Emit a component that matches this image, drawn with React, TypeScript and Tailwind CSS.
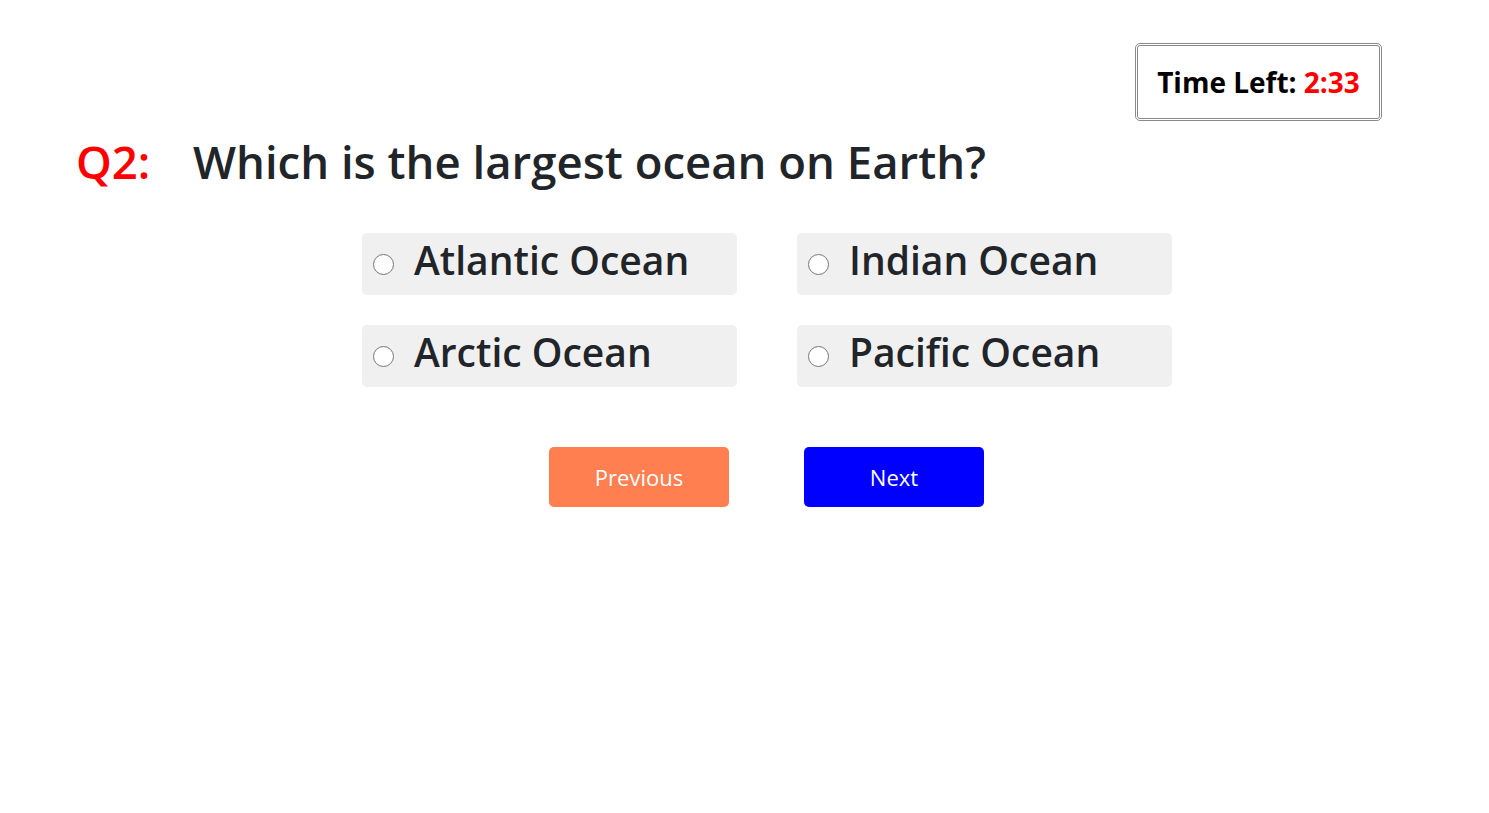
import { useState } from "react";

const options = ["Atlantic Ocean", "Indian Ocean", "Arctic Ocean", "Pacific Ocean"];

const App = () => {
  const [selected, setSelected] = useState<string | null>(null);

  return (
    <div
      className="min-h-screen bg-white text-[#212529]"
      style={{ fontFamily: '"Segoe UI", "Open Sans", sans-serif' }}
    >
      <div className="flex justify-end pt-[43px] pr-[107px]">
        <div className="flex h-[78px] w-[247px] items-center justify-center rounded-[5px] border-[3px] border-double border-[#888]">
          <span className="text-[28px] font-bold text-black">
            Time Left: <span className="text-[#ff0000]">2:33</span>
          </span>
        </div>
      </div>

      <h1 className="mt-[8px] flex pl-[76px] text-[45.5px] font-semibold leading-[64px]">
        <span className="w-[117px] text-[#ff0000]">Q2:</span>
        <span>Which is the largest ocean on Earth?</span>
      </h1>

      <div className="mt-[40px] ml-[362px] grid w-[810px] grid-cols-2 gap-x-[60px] gap-y-[30px]">
        {options.map((opt) => (
          <label
            key={opt}
            className="flex h-[62px] cursor-pointer items-center rounded-[5px] bg-[#f0f0f0] pl-[11px]"
          >
            <input
              type="radio"
              name="answer"
              checked={selected === opt}
              onChange={() => setSelected(opt)}
              className="h-[21px] w-[21px] appearance-none rounded-full border-[1.5px] border-[#767676] bg-white checked:border-[6px] checked:border-[#0075ff]"
            />
            <span className="ml-[20px] pb-[10px] text-[39px] font-semibold leading-none">{opt}</span>
          </label>
        ))}
      </div>

      <div className="mt-[60px] ml-[549px] flex gap-[75px]">
        <button className="h-[60px] w-[180px] rounded-[5px] bg-[#ff7f50] text-[22px] text-white">
          Previous
        </button>
        <button className="h-[60px] w-[180px] rounded-[5px] bg-[#0000ff] text-[22px] text-white">
          Next
        </button>
      </div>
    </div>
  );
};

export default App;
